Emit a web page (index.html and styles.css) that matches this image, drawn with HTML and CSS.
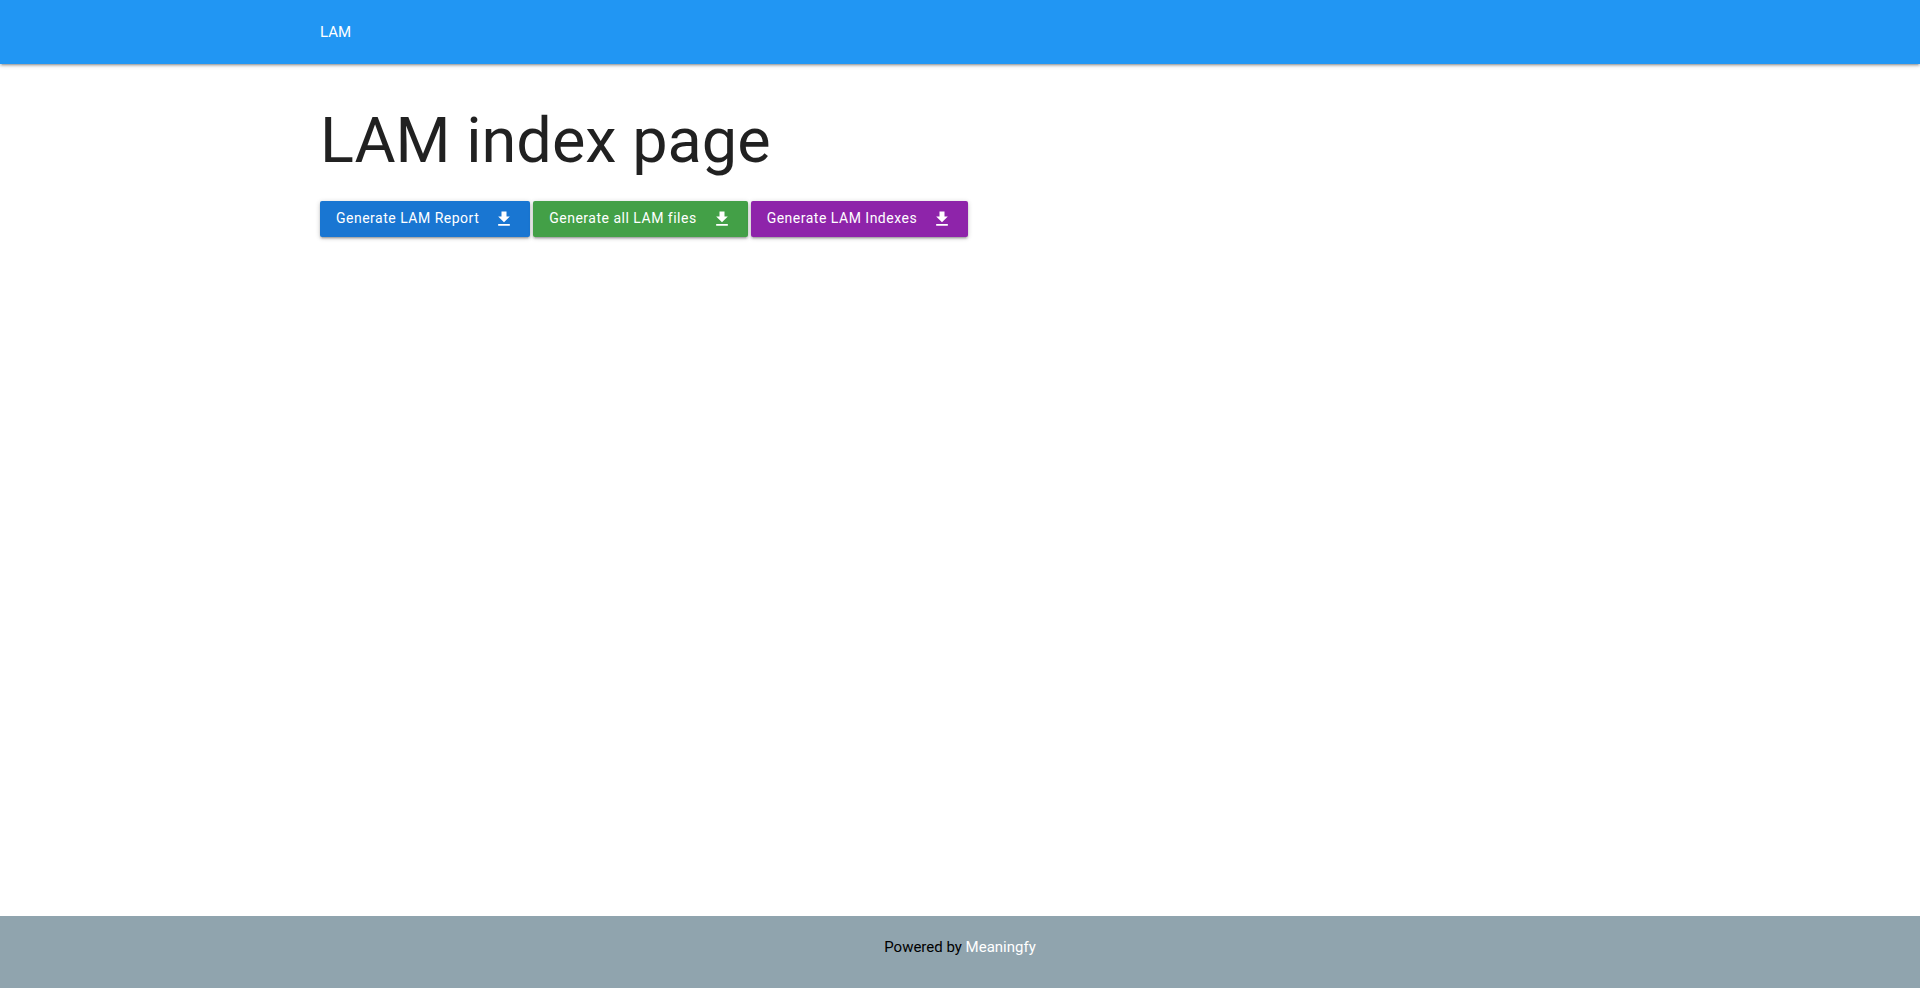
FILE: index.html
```html
<!DOCTYPE html>
<html lang="en">
<head>
<meta charset="utf-8">
<title>LAM</title>
<link rel="stylesheet" href="styles.css">
</head>
<body>
<header class="navbar">
  <nav class="container"><a class="nav-link" href="#">LAM</a></nav>
</header>
<main class="container content">
  <h1 class="title">LAM index page</h1>
  <div class="actions">
    <button type="button" class="btn btn-blue"><span class="btn-label">Generate LAM Report</span>
      <svg class="icon" viewBox="0 0 24 24" aria-hidden="true"><path d="M19 9h-4V3H9v6H5l7 7 7-7zM5 18v2h14v-2H5z"/></svg></button>
    <button type="button" class="btn btn-green"><span class="btn-label">Generate all LAM files</span>
      <svg class="icon" viewBox="0 0 24 24" aria-hidden="true"><path d="M19 9h-4V3H9v6H5l7 7 7-7zM5 18v2h14v-2H5z"/></svg></button>
    <button type="button" class="btn btn-purple"><span class="btn-label">Generate LAM Indexes</span>
      <svg class="icon" viewBox="0 0 24 24" aria-hidden="true"><path d="M19 9h-4V3H9v6H5l7 7 7-7zM5 18v2h14v-2H5z"/></svg></button>
  </div>
</main>
<footer class="footer">
  <p class="credit">Powered by <a class="credit-link" href="#">Meaningfy</a></p>
</footer>
</body>
</html>
```
FILE: styles.css
```css
* {
  box-sizing: border-box;
}

body {
  margin: 0;
  min-height: 100vh;
  display: flex;
  flex-direction: column;
  font-family: Roboto, sans-serif;
  font-size: 15px;
  line-height: 22px;
  color: rgba(0, 0, 0, 0.87);
  background: #fff;
}

.container {
  width: 90%;
  max-width: 1280px;
  margin: 0 auto;
}

.navbar {
  background: #2196f3;
  box-shadow: 0 2px 2px 0 rgba(0, 0, 0, 0.14), 0 3px 1px -2px rgba(0, 0, 0, 0.12), 0 1px 5px 0 rgba(0, 0, 0, 0.2);
}

.nav-link {
  display: inline-block;
  line-height: 64px;
  vertical-align: top;
  color: #fff;
  text-decoration: none;
}

.content {
  flex: 1;
}

.title {
  margin: 42px 0 25px;
  font-size: 63px;
  font-weight: 400;
  line-height: 70px;
}

.actions {
  display: flex;
  flex-wrap: wrap;
  gap: 3px;
}

.btn {
  display: flex;
  align-items: center;
  gap: 15px;
  height: 36px;
  padding: 0 16px;
  border: 0;
  border-radius: 2px;
  color: #fff;
  font-family: inherit;
  font-size: 14px;
  letter-spacing: 0.5px;
  cursor: pointer;
  box-shadow: 0 2px 2px 0 rgba(0, 0, 0, 0.14), 0 3px 1px -2px rgba(0, 0, 0, 0.12), 0 1px 5px 0 rgba(0, 0, 0, 0.2);
}

.btn-label {
  padding-bottom: 2px;
}

.btn-blue {
  background: #1976d2;
}

.btn-green {
  background: #43a047;
}

.btn-purple {
  background: #8e24aa;
}

.icon {
  width: 20px;
  height: 20px;
  fill: currentColor;
}

.footer {
  padding: 20px 0 30px;
  background: #90a4ae;
  color: #000;
  text-align: center;
}

.credit {
  margin: 0;
}

.credit-link {
  color: #fff;
  text-decoration: none;
}
```
